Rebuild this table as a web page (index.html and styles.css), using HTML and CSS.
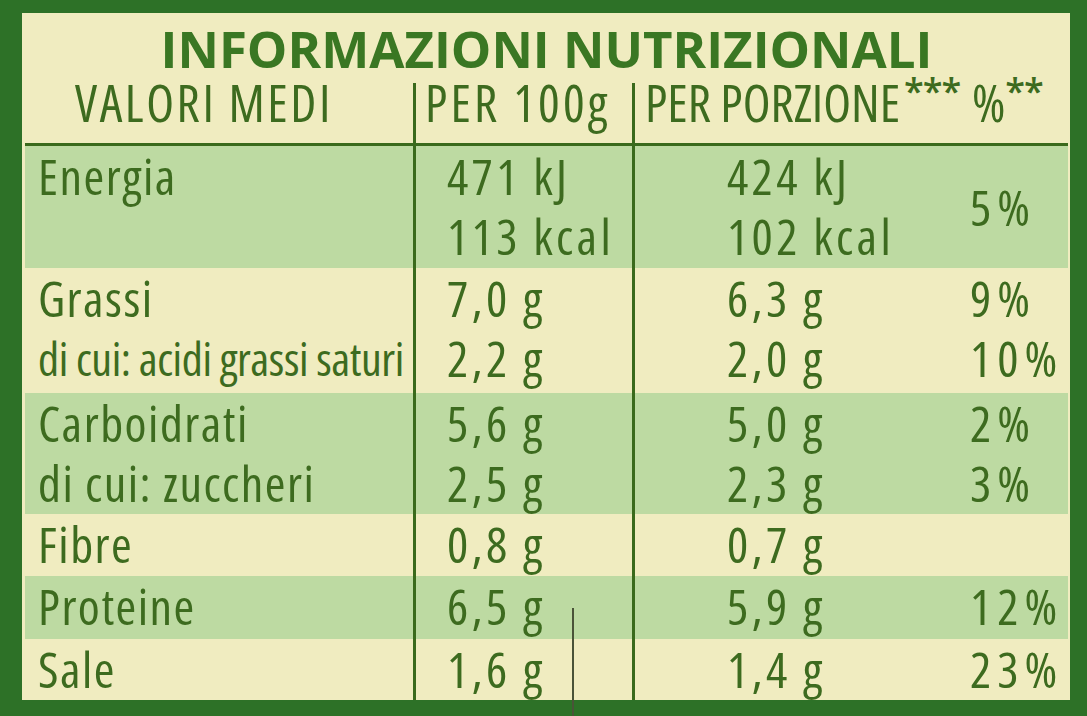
FILE: index.html
```html
<!DOCTYPE html>
<html lang="it">
<head>
<meta charset="utf-8">
<title>Informazioni nutrizionali</title>
<link rel="stylesheet" href="styles.css">
</head>
<body>
<div class="label">
  <h1 class="title">INFORMAZIONI NUTRIZIONALI</h1>
  <div class="table">
    <div class="row head">
      <div class="c c1">VALORI MEDI</div>
      <div class="c c2">PER 100g</div>
      <div class="c c3">PER PORZIONE<span class="ast">***</span></div>
      <div class="c c4">%<span class="ast ast-pct">**</span></div>
    </div>
    <div class="row band r-energia">
      <div class="c c1"><span>Energia</span></div>
      <div class="c c2"><span>471 kJ</span><span>113 kcal</span></div>
      <div class="c c3"><span>424 kJ</span><span>102 kcal</span></div>
      <div class="c c4 mid"><span>5%</span></div>
    </div>
    <div class="row r-grassi">
      <div class="c c1"><span>Grassi</span><span class="squeeze">di cui: acidi grassi saturi</span></div>
      <div class="c c2"><span>7,0 g</span><span>2,2 g</span></div>
      <div class="c c3"><span>6,3 g</span><span>2,0 g</span></div>
      <div class="c c4"><span>9%</span><span>10%</span></div>
    </div>
    <div class="row band r-carbo">
      <div class="c c1"><span>Carboidrati</span><span>di cui: zuccheri</span></div>
      <div class="c c2"><span>5,6 g</span><span>2,5 g</span></div>
      <div class="c c3"><span>5,0 g</span><span>2,3 g</span></div>
      <div class="c c4"><span>2%</span><span>3%</span></div>
    </div>
    <div class="row r-fibre">
      <div class="c c1"><span>Fibre</span></div>
      <div class="c c2"><span>0,8 g</span></div>
      <div class="c c3"><span>0,7 g</span></div>
      <div class="c c4"></div>
    </div>
    <div class="row band r-prot">
      <div class="c c1"><span>Proteine</span></div>
      <div class="c c2"><span>6,5 g</span></div>
      <div class="c c3"><span>5,9 g</span></div>
      <div class="c c4"><span>12%</span></div>
    </div>
    <div class="row r-sale">
      <div class="c c1"><span>Sale</span></div>
      <div class="c c2"><span>1,6 g</span></div>
      <div class="c c3"><span>1,4 g</span></div>
      <div class="c c4"><span>23%</span></div>
    </div>
  </div>
  <div class="crease"></div>
</div>
</body>
</html>
```
FILE: styles.css
```css
html, body {
  margin: 0;
  padding: 0;
  background: #2d7127;
}

.label {
  position: relative;
  width: 1087px;
  height: 716px;
  box-sizing: border-box;
  border-style: solid;
  border-color: #2d7127;
  border-width: 13px 17px 16px 22px;
  padding: 0 2px 0 3px;
  background: #f0ecc0;
  font-family: "Open Sans", "Liberation Sans", sans-serif;
  color: #3d6b1f;
}

.title {
  margin: 0;
  height: 70px;
  font-size: 51px;
  line-height: 70px;
  font-weight: 700;
  text-align: center;
  color: #3a7723;
}

.table {
  display: flex;
  flex-direction: column;
}

.row {
  display: grid;
  grid-template-columns: 388px 219px 338px 1fr;
  font-size: 50px;
  line-height: 60px;
  font-stretch: 75%;
}

.head {
  height: 60px;
  line-height: 38px;
  font-size: 51px;
  border-bottom: 3px solid #3a6a1c;
}

.band {
  background: #bddaa2;
}

.r-energia { height: 122px; }
.r-grassi  { height: 125px; }
.r-carbo   { height: 121px; }
.r-fibre   { height: 62px; }
.r-prot    { height: 63px; }
.r-sale    { height: 61px; }

.c {
  display: flex;
  flex-direction: column;
  white-space: nowrap;
}

.c1 { padding-left: 13px; letter-spacing: 1.5px; }
.c2 { border-left: 3px solid #3a6a1c; padding-left: 31px; letter-spacing: 3.3px; }
.c3 { border-left: 3px solid #3a6a1c; padding-left: 92px; letter-spacing: 3.3px; }
.c4 { padding-left: 0; letter-spacing: 6px; }

.squeeze {
  font-size: 46px;
  letter-spacing: -0.4px;
}

.head .c { display: block; }
.head .c1 { padding-left: 50px; letter-spacing: 2.6px; }
.head .c2 { padding-left: 9px; letter-spacing: 3.2px; }
.head .c3 { padding-left: 10px; letter-spacing: 0; }
.head .c4 { padding-left: 2px; letter-spacing: 0; }

.mid {
  justify-content: center;
}

.ast {
  font-size: 36px;
  line-height: 0;
  vertical-align: 18px;
  margin-left: 4px;
  font-weight: 600;
  font-stretch: 100%;
  letter-spacing: -1px;
}

.ast-pct {
  margin-left: 0;
}

.crease {
  position: absolute;
  left: 550px;
  top: 595px;
  width: 2px;
  height: 121px;
  background: #4a5338;
}
```
